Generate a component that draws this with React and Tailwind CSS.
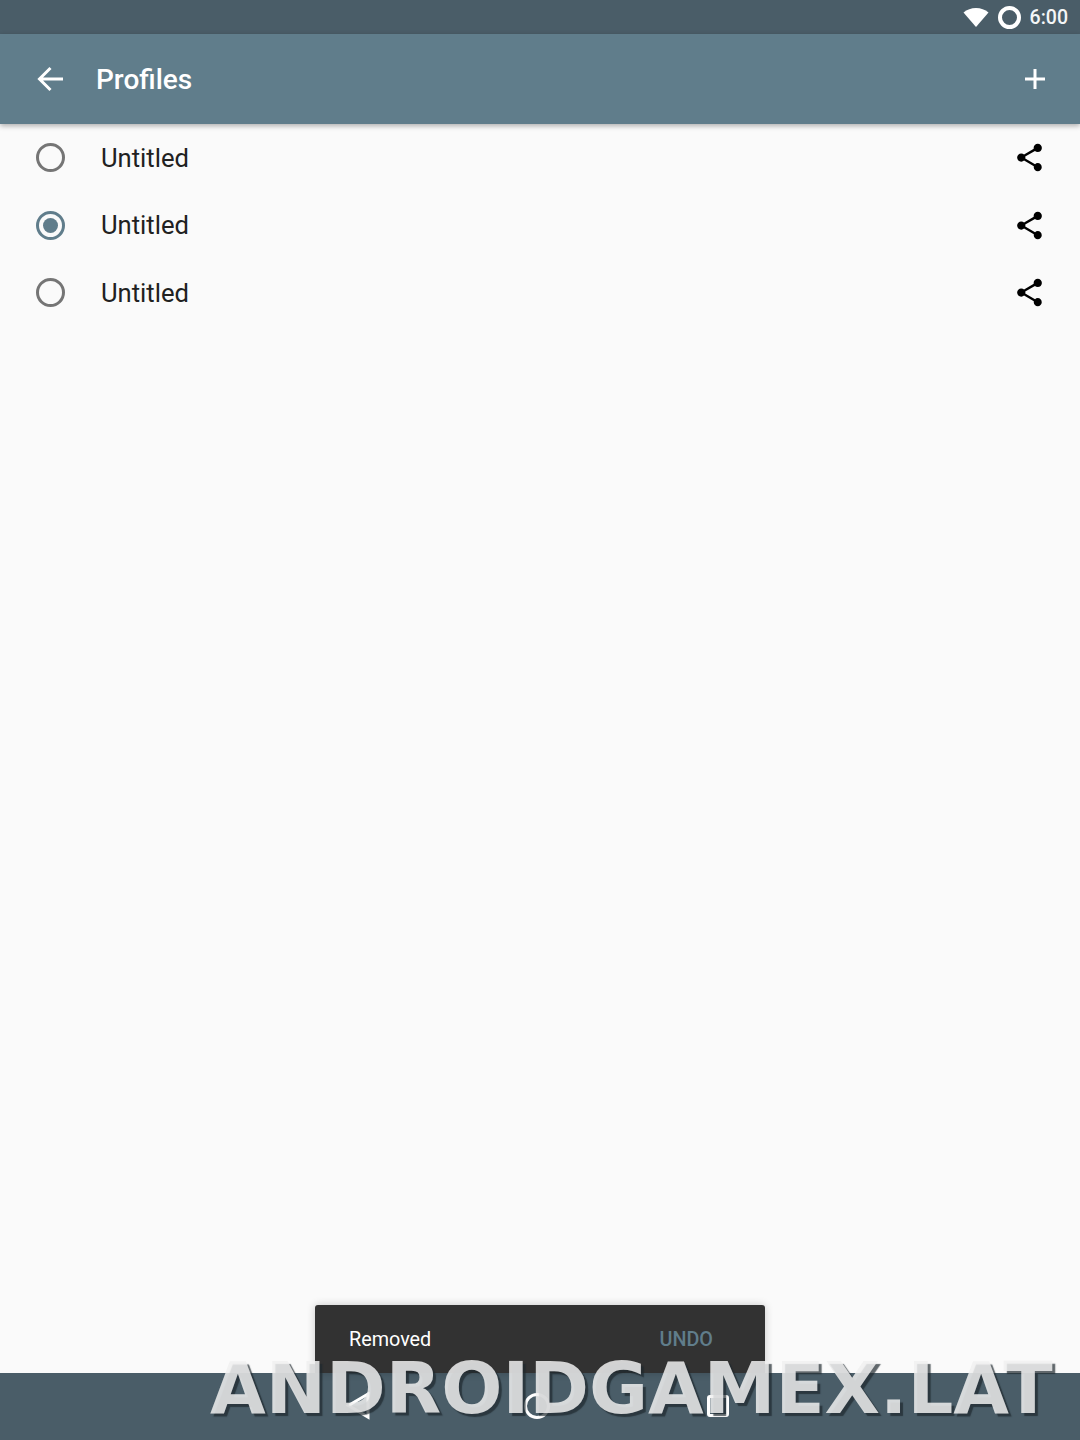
const profiles = [{ id: 1, selected: false }, { id: 2, selected: true }, { id: 3, selected: false }]

function ShareIcon() {
  return (
    <svg width="33" height="33" viewBox="0 0 24 24" fill="#000">
      <path d="M18 16.08c-.76 0-1.44.3-1.96.77L8.91 12.7c.05-.23.09-.46.09-.7s-.04-.47-.09-.7l7.05-4.11c.54.5 1.25.81 2.04.81 1.66 0 3-1.34 3-3s-1.34-3-3-3-3 1.34-3 3c0 .24.04.47.09.7L8.04 9.81C7.5 9.31 6.79 9 6 9c-1.66 0-3 1.34-3 3s1.34 3 3 3c.79 0 1.5-.31 2.04-.81l7.12 4.16c-.05.21-.08.43-.08.65 0 1.61 1.31 2.92 2.92 2.92s2.92-1.31 2.92-2.92-1.31-2.92-2.92-2.92z" />
    </svg>
  )
}

function Radio({ selected }) {
  return (
    <div className={`flex h-[29px] w-[29px] items-center justify-center rounded-full border-[3px] ${selected ? 'border-[#607d8b]' : 'border-[#757575]'}`}>
      {selected && <div className="h-[15px] w-[15px] rounded-full bg-[#607d8b]" />}
    </div>
  )
}

export default function App() {
  return (
    <div className="relative flex h-[1440px] w-[1080px] flex-col overflow-hidden bg-[#fafafa] font-['Roboto',sans-serif]">
      {/* Status bar */}
      <div className="flex h-[34px] items-center justify-end bg-[#4a5d68] pr-[12px] text-white">
        <svg width="26" height="20" viewBox="0 0 26 20" fill="#fff" className="mr-[9px]">
          <path d="M0.5 5.5C4 2.5 8.2 1 13 1s9 1.500 12.500 4.500L13 20z" />
        </svg>
        <div className="mr-[9px] h-[23px] w-[23px] rounded-full border-[4px] border-white" />
        <span className="mt-[1px] text-[19.5px] leading-none font-medium text-[#f4f6f7]">6:00</span>
      </div>

      {/* App bar */}
      <div className="z-10 flex h-[90px] items-center bg-[#607d8b] pr-[33px] pl-[36px] shadow-[0_2px_5px_rgba(0,0,0,0.3)]">
        <svg width="30" height="30" viewBox="0 0 30 30" fill="none" stroke="#fff" strokeWidth="3" className="-mt-[1px]">
          <path d="M27 15H4M14.500 4 3.500 15l11 11" />
        </svg>
        <span className="mt-[2px] ml-[30px] flex-1 text-[28px] leading-none font-medium text-white">Profiles</span>
        <svg width="24" height="24" viewBox="0 0 24 24" fill="none" stroke="#fff" strokeWidth="3" className="-mt-[1px]">
          <path d="M12 2v20M2 12h20" />
        </svg>
      </div>

      {/* Profile list */}
      <div className="flex-1">
        {profiles.map((profile) => (
          <div key={profile.id} className="flex h-[67.5px] items-center pr-[34px] pl-[36px]">
            <Radio selected={profile.selected} />
            <span className="mt-[2px] ml-[36px] flex-1 text-[25.6px] leading-none text-[#212121]">Untitled</span>
            <ShareIcon />
          </div>
        ))}
      </div>

      {/* Nav bar */}
      <div className="flex h-[67px] items-start justify-center bg-[#4a5d68] pt-[19px]">
        <svg width="400" height="32" viewBox="0 0 400 32" fill="none" stroke="#fff" strokeWidth="3">
          <path d="M28 2 8.500 13.500 28 25z" />
          <circle cx="197" cy="14" r="11.500" />
          <rect x="368.500" y="4.500" width="19" height="19" rx="1.500" />
        </svg>
      </div>

      {/* Snackbar */}
      <div className="absolute top-[1305px] left-[315px] flex h-[68px] w-[450px] items-center justify-between rounded-t-[3px] bg-[#323232] pr-[52px] pl-[34px] shadow-[0_0_8px_rgba(0,0,0,0.2)]">
        <span className="mt-[2px] text-[19.8px] leading-none text-white">Removed</span>
        <span className="mt-[2px] text-[19.8px] leading-none font-medium text-[#607d8b]">UNDO</span>
      </div>

      {/* Watermark */}
      <div className="absolute top-[1346px] left-[210px] font-['DejaVu_Sans',sans-serif] text-[72px] leading-[84px] font-bold whitespace-nowrap text-[rgba(240,240,240,0.85)] [text-shadow:3px_3px_1px_rgba(30,40,45,0.7)]">
        ANDROIDGAMEX.LAT
      </div>
    </div>
  )
}
